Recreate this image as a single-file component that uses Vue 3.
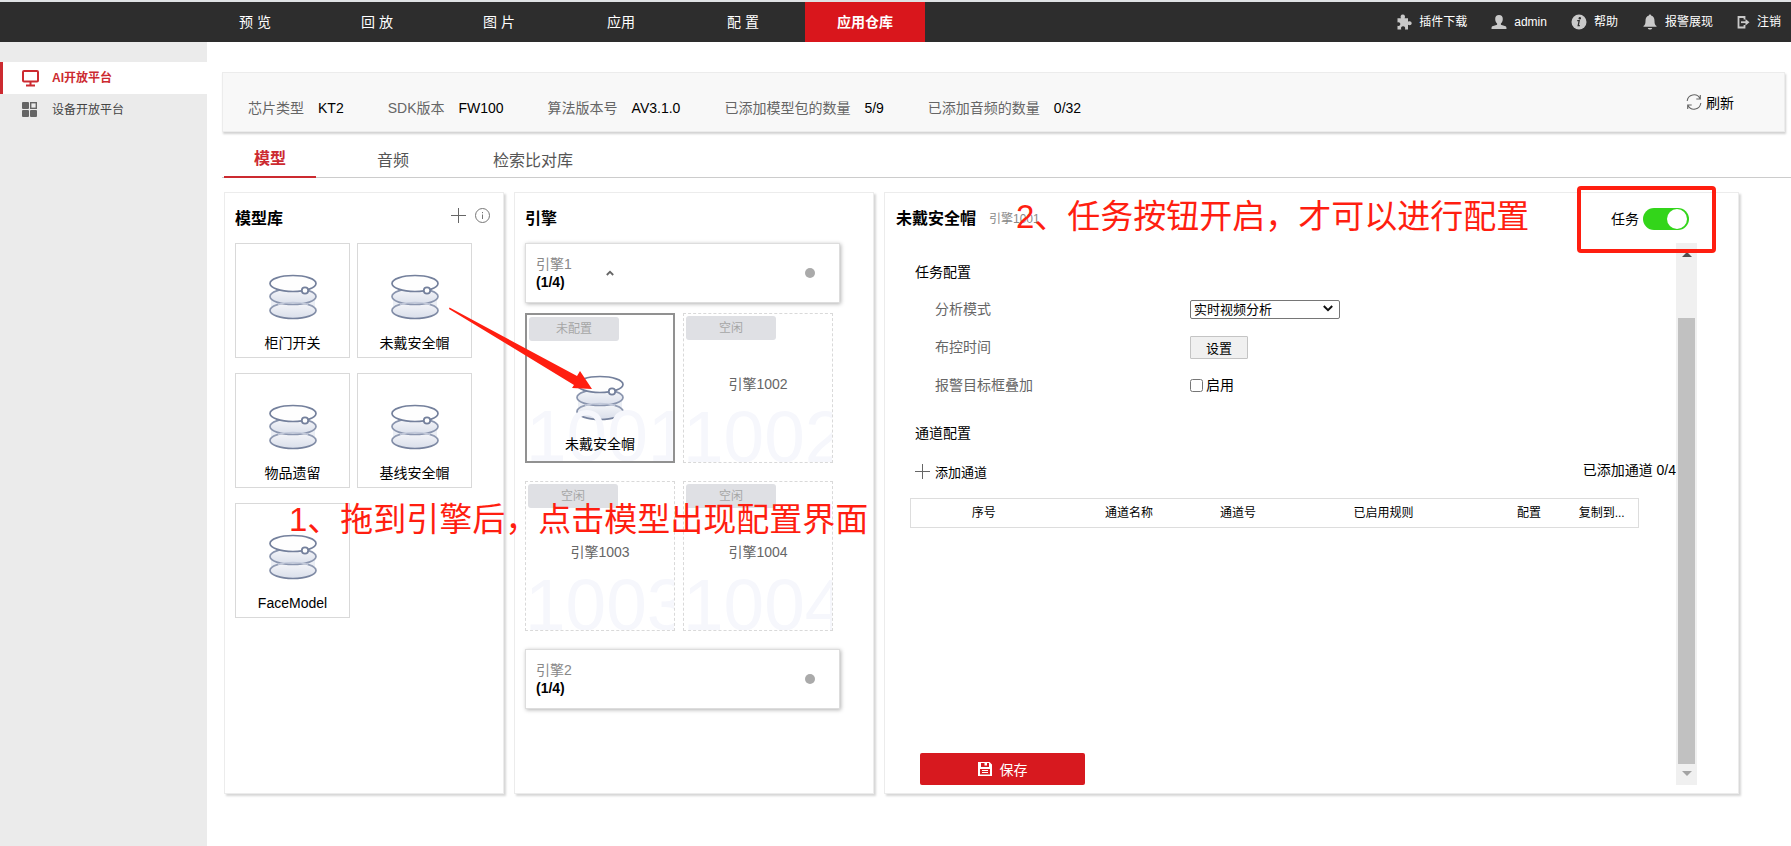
<script setup>
import { ref } from 'vue'

const navItems = ['预 览', '回 放', '图 片', '应用', '配 置', '应用仓库']
const activeNav = ref('应用仓库')

const chipInfo = [
  { label: '芯片类型', value: 'KT2' },
  { label: 'SDK版本', value: 'FW100' },
  { label: '算法版本号', value: 'AV3.1.0' },
  { label: '已添加模型包的数量', value: '5/9' },
  { label: '已添加音频的数量', value: '0/32' },
]

const tabs = ['模型', '音频', '检索比对库']
const activeTab = ref('模型')

const models = ['柜门开关', '未戴安全帽', '物品遗留', '基线安全帽', 'FaceModel']

const slots = [
  { id: '1001', model: '未戴安全帽', status: '未配置' },
  { id: '1002', status: '空闲' },
  { id: '1003', status: '空闲' },
  { id: '1004', status: '空闲' },
]
const selectedSlot = ref('1001')

const columns = [
  { title: '序号', width: 20 },
  { title: '通道名称', width: 20 },
  { title: '通道号', width: 10 },
  { title: '已启用规则', width: 30 },
  { title: '配置', width: 10 },
  { title: '复制到...', width: 10 },
]

const taskOn = ref(true)
const overlayOn = ref(false)
</script>

<template>
  <div class="page" lang="zh-CN">
    <svg class="defs" width="0" height="0" aria-hidden="true">
      <defs>
        <linearGradient id="diskFill" x1="0" y1="0" x2="0" y2="1">
          <stop offset="0" stop-color="#f6f7fa" />
          <stop offset="1" stop-color="#d9deea" />
        </linearGradient>
        <linearGradient id="diskLine" x1="0" y1="0" x2="0" y2="1">
          <stop offset="0" stop-color="#9aa4ba" />
          <stop offset="1" stop-color="#74809c" />
        </linearGradient>
        <symbol id="disk" viewBox="0 0 48 46">
          <rect x="2" y="22" width="44" height="14" fill="#eceff5" />
          <ellipse cx="24" cy="36.500" rx="23" ry="8" fill="url(#diskFill)" stroke="url(#diskLine)" stroke-width="1.700" />
          <ellipse cx="24" cy="22.500" rx="23" ry="8" fill="url(#diskFill)" stroke="#8a95ae" stroke-width="1.700" />
          <path d="M9 30.300Q24 26.500 39 30.300" fill="none" stroke="#c3cadb" stroke-width="1.400" />
          <ellipse cx="24" cy="9.500" rx="23" ry="8" fill="#fefefe" stroke="#74809c" stroke-width="1.700" />
          <circle cx="36" cy="16.500" r="3.200" fill="#fff" stroke="#74809c" stroke-width="1.800" />
        </symbol>
      </defs>
    </svg>

    <header class="topbar">
      <nav class="nav">
        <a v-for="n in navItems" :key="n" href="#" class="nav-item" :class="{ active: n === activeNav }">{{ n }}</a>
      </nav>
      <div class="tools">
        <a href="#" class="tool">
          <svg width="16" height="16" viewBox="0 0 16 16" fill="#c9c9c9"><path d="M5 4.200C4 2.500 4.800.5 6.800.5s2.800 2 1.800 3.700H12v3.600c1.600-1 3.700-.3 3.700 1.500s-2.100 2.500-3.700 1.500v4.700H8.900c.8-1.700 0-3.200-1.800-3.200s-2.600 1.500-1.800 3.200H1.500v-3.700c1.500.6 2.800-.1 2.800-1.700S3 7.800 1.500 8.400V4.200z" /></svg>
          <span>插件下载</span>
        </a>
        <a href="#" class="tool">
          <svg width="16" height="16" viewBox="0 0 16 16" fill="#c9c9c9"><path d="M8 1c2.500 0 3.800 1.700 3.800 3.900 0 2-.9 3.700-1.900 4.600v1.200l4.700 1.600c.6.300.9.900.9 2.700H.5c0-1.800.3-2.400.9-2.700l4.700-1.600V9.500c-1-.9-1.900-2.600-1.900-4.600C4.200 2.700 5.500 1 8 1z" /></svg>
          <span>admin</span>
        </a>
        <a href="#" class="tool">
          <svg width="16" height="16" viewBox="0 0 16 16"><circle cx="8" cy="8" r="7.500" fill="#c9c9c9" /><circle cx="8.800" cy="4.200" r="1.200" fill="#2d2d2d" /><path d="M6.200 6.700h2L7.200 11.700h1.600" fill="none" stroke="#2d2d2d" stroke-width="1.300" /></svg>
          <span>帮助</span>
        </a>
        <a href="#" class="tool">
          <svg width="16" height="16" viewBox="0 0 16 16" fill="#c9c9c9"><path d="M8 .5c.8 0 1.100.5 1.100 1.100C11.600 2.200 12.500 4.200 12.500 7c0 3 .6 4 2 5v.8h-13V12c1.400-1 2-2 2-5 0-2.800.9-4.800 3.400-5.400C6.900 1 7.200.5 8 .5zM5.800 14h4.400c-.5 2-3.900 2-4.400 0z" /></svg>
          <span>报警展现</span>
        </a>
        <a href="#" class="tool">
          <svg width="13" height="16" viewBox="0 0 13 16" fill="none" stroke="#c9c9c9" stroke-width="1.800"><path d="M7.500 5.500V3H1.500v10.500h6V11" /><path d="M4 8.200h5" /><path d="M8.500 5L12.500 8.200l-4 3.200z" fill="#c9c9c9" stroke="none" /></svg>
          <span>注销</span>
        </a>
      </div>
    </header>

    <div class="main">
      <aside class="sidebar">
        <a href="#" class="side-item active">
          <svg width="18" height="18" viewBox="0 0 18 18" fill="none" stroke="#cc2a30" stroke-width="2"><rect x="1" y="2" width="15" height="10.500" rx="1" /><path d="M8.500 12.500V16M4 16.500h9" /></svg>
          <span>AI开放平台</span>
        </a>
        <a href="#" class="side-item">
          <svg width="18" height="18" viewBox="0 0 18 18" fill="#666"><rect x="0" y="1" width="7" height="7" rx="1" /><rect x="8.700" y="1.700" width="5.600" height="5.600" fill="none" stroke="#666" stroke-width="1.400" /><rect x="0" y="9" width="7" height="7" rx="1" /><rect x="8" y="9" width="7" height="7" rx="1" /></svg>
          <span>设备开放平台</span>
        </a>
      </aside>

      <main class="content">
        <section class="info-bar">
          <dl class="info-list">
            <div v-for="c in chipInfo" :key="c.label" class="info-item">
              <dt>{{ c.label }}</dt>
              <dd>{{ c.value }}</dd>
            </div>
          </dl>
          <button type="button" class="plain refresh">
            <svg width="16" height="16" viewBox="0 0 16 16" fill="none" stroke="#666" stroke-width="1.100"><path d="M1.200 7A6.800 6.800 0 0 1 14 4.500M14.300 1v4h-4M14.800 9A6.800 6.800 0 0 1 2 11.500M1.700 15v-4h4" /></svg>
            <span>刷新</span>
          </button>
        </section>

        <nav class="tabs">
          <button v-for="t in tabs" :key="t" type="button" class="tab" :class="{ active: t === activeTab }" @click="activeTab = t">{{ t }}</button>
        </nav>

        <div class="panels">
          <section class="panel library">
            <header class="panel-head">
              <h2>模型库</h2>
              <div class="head-actions">
                <button type="button" class="plain" aria-label="添加模型">
                  <svg width="16" height="16" viewBox="0 0 16 16" stroke="#666"><path d="M7.500 0v15M0 7.500h15" /></svg>
                </button>
                <button type="button" class="plain" aria-label="说明">
                  <svg width="16" height="16" viewBox="0 0 16 16" fill="none" stroke="#777"><circle cx="7.500" cy="7.500" r="7" /><path d="M7.500 6.500V11M7.500 4v1.200" /></svg>
                </button>
              </div>
            </header>
            <div class="model-grid">
              <div v-for="m in models" :key="m" class="card">
                <svg class="disk" width="48" height="46"><use href="#disk" /></svg>
                <span>{{ m }}</span>
              </div>
            </div>
          </section>

          <section class="panel engines">
            <header class="panel-head"><h2>引擎</h2></header>
            <div class="engine-bar">
              <div class="engine-name"><span>引擎1</span><strong>(1/4)</strong></div>
              <svg class="chevron" width="8" height="6" viewBox="0 0 8 6" fill="none" stroke="#666" stroke-width="1.800"><path d="M.8 5L4 1.800 7.200 5" /></svg>
              <i class="dot"></i>
            </div>
            <div class="slot-grid">
              <div v-for="s in slots" :key="s.id" class="slot" :class="{ selected: s.id === selectedSlot, filled: s.model }" @click="selectedSlot = s.id">
                <svg v-if="s.model" class="disk" width="48" height="46"><use href="#disk" /></svg>
                <span class="watermark" aria-hidden="true">{{ s.id }}</span>
                <span class="status">{{ s.status }}</span>
                <span class="slot-name">{{ s.model || '引擎' + s.id }}</span>
              </div>
            </div>
            <div class="engine-bar second">
              <div class="engine-name"><span>引擎2</span><strong>(1/4)</strong></div>
              <i class="dot"></i>
            </div>
          </section>

          <section class="panel config">
            <header class="panel-head config-head">
              <h2>未戴安全帽</h2>
              <span class="sub">引擎1001</span>
              <label class="task-switch">
                <span>任务</span>
                <input v-model="taskOn" type="checkbox" role="switch" />
              </label>
            </header>
            <div class="config-body">
              <div class="config-scroll">
                <h3>任务配置</h3>
                <div class="row">
                  <label for="mode">分析模式</label>
                  <div class="select-wrap">
                    <select id="mode"><option>实时视频分析</option></select>
                    <svg width="10" height="7" viewBox="0 0 10 7" fill="none" stroke="#111" stroke-width="2"><path d="M.8 1L5 5.200 9.200 1" /></svg>
                  </div>
                </div>
                <div class="row">
                  <label for="schedule">布控时间</label>
                  <button id="schedule" type="button" class="set-btn">设置</button>
                </div>
                <div class="row">
                  <span>报警目标框叠加</span>
                  <label class="check"><input v-model="overlayOn" type="checkbox" />启用</label>
                </div>
                <h3 class="channel-title">通道配置</h3>
                <div class="channel-tools">
                  <button type="button" class="plain add-channel">
                    <svg width="16" height="16" viewBox="0 0 16 16" stroke="#666"><path d="M7.500 0v15M0 7.500h15" /></svg>
                    <span>添加通道</span>
                  </button>
                  <span class="count">已添加通道 0/4</span>
                </div>
                <table class="channels">
                  <thead>
                    <tr>
                      <th v-for="c in columns" :key="c.title" :style="{ width: c.width + '%' }">{{ c.title }}</th>
                    </tr>
                  </thead>
                </table>
                <button type="button" class="save">
                  <svg width="14" height="14" viewBox="0 0 14 14"><path fill="#fff" fill-rule="evenodd" d="M0 0h11.500L14 2.500V14H0zM3 1v4h8V1H9v2.500H6.500V1zM2 7v5.500h10V7z" /><path d="M4 8.500h6M4 10.500h6" stroke="#fff" /></svg>
                  <span>保存</span>
                </button>
              </div>
              <div class="scrollbar" aria-hidden="true">
                <i class="arrow up"></i>
                <i class="thumb"></i>
                <i class="arrow down"></i>
              </div>
            </div>
          </section>
        </div>
      </main>
    </div>

    <div class="notes">
      <p class="note note-drag">1、拖到引擎后，点击模型出现配置界面</p>
      <p class="note note-task">2、任务按钮开启，才可以进行配置</p>
      <div class="note-frame"></div>
      <svg class="note-arrow" width="146" height="84" viewBox="0 0 146 84"><path d="M1.500.5L129 69l3-5 12 18-20-1 2-3L1 2z" fill="#ff1e10" /></svg>
    </div>
  </div>
</template>

<style>
body {
  margin: 0;
}
</style>

<style scoped>
.page {
  position: relative;
  box-sizing: border-box;
  display: flex;
  flex-direction: column;
  min-height: 100vh;
  background: #fff;
  color: #000;
  font-family: "Liberation Sans", "Noto Sans CJK SC", sans-serif;
  font-size: 14px;
  line-height: 20px;
}
.page *,
.page *::before {
  box-sizing: border-box;
}
.defs {
  position: absolute;
}
svg {
  display: block;
  flex: none;
}
a {
  text-decoration: none;
}
h2,
h3,
p,
dl,
dd {
  margin: 0;
}
button,
select {
  font-family: inherit;
}
.plain {
  display: flex;
  align-items: center;
  padding: 0;
  border: 0;
  background: none;
}

.topbar {
  display: flex;
  justify-content: space-between;
  height: 42px;
  padding: 0 10px 0 195px;
  border-top: 2px solid #dfe2e4;
  background: #2d2d2d;
}
.nav {
  display: flex;
  gap: 2px;
}
.nav-item {
  width: 120px;
  line-height: 40px;
  text-align: center;
  color: #fff;
}
.nav-item.active {
  background: #d9161c;
  font-weight: bold;
}
.tools {
  display: flex;
  align-items: center;
  gap: 24px;
}
.tool {
  display: flex;
  align-items: center;
  gap: 7px;
  color: #fff;
  font-size: 12px;
}

.main {
  display: flex;
  flex: 1;
}
.sidebar {
  flex: none;
  width: 207px;
  padding-top: 20px;
  background: #ebebeb;
}
.side-item {
  display: flex;
  align-items: center;
  gap: 12px;
  height: 32px;
  padding-left: 19px;
  border-left: 3px solid transparent;
  color: #444;
  font-size: 12px;
}
.side-item.active {
  border-color: #cc2a30;
  background: #fff;
  color: #cc2a30;
  font-weight: bold;
}
.content {
  display: flex;
  flex: 1;
  flex-direction: column;
  min-width: 0;
  padding: 30px 0 52px 15px;
}

.info-bar {
  display: flex;
  justify-content: space-between;
  height: 60px;
  margin-right: 6px;
  padding: 0 50px 0 25px;
  border: 1px solid #ececec;
  background: #f8f8f8;
  box-shadow: 1px 2px 2px rgba(0, 0, 0, 0.18);
}
.info-list {
  display: flex;
  gap: 44px;
  padding-top: 25px;
}
.info-item {
  display: flex;
  gap: 14px;
}
.info-item dt {
  color: #666;
}
.refresh {
  gap: 4px;
  align-self: center;
  font-size: 14px;
}

.tabs {
  display: flex;
  height: 46px;
  padding-left: 2px;
  border-bottom: 1px solid #ccc;
}
.tab {
  width: 140px;
  height: 46px;
  padding: 8px 0 0;
  border: 0;
  background: none;
  color: #555;
  font-size: 16px;
}
.tab.active {
  width: 92px;
  margin-right: 7px;
  padding-top: 6px;
  border-bottom: 2px solid #cc2a30;
  color: #cc2a30;
  font-weight: bold;
}

.panels {
  display: flex;
  flex: 1;
  gap: 10px;
  margin: 14px 52px 0 2px;
}
.panel {
  flex: none;
  min-height: 602px;
  border: 1px solid #ececec;
  box-shadow: 2px 2px 2px rgba(0, 0, 0, 0.16);
}
.library {
  width: 280px;
  padding: 0 10px;
}
.engines {
  width: 360px;
  padding: 0 10px;
}
.config {
  display: flex;
  flex: 1;
  flex-direction: column;
  padding: 0 41px 8px 0;
}
.panel-head {
  display: flex;
  align-items: center;
  height: 50px;
  padding-top: 2px;
}
.panel-head h2 {
  font-size: 16px;
  font-weight: bold;
}
.head-actions {
  display: flex;
  gap: 8px;
  margin: 0 2px 6px auto;
}

.model-grid {
  display: grid;
  grid-template-columns: 115px 115px;
  gap: 15px 7px;
}
.card {
  display: flex;
  flex-direction: column;
  align-items: center;
  height: 115px;
  padding-top: 30px;
  border: 1px solid #d9d9d9;
}
.card span {
  margin-top: 13px;
}

.engine-bar {
  display: flex;
  align-items: center;
  width: 315px;
  height: 60px;
  padding: 0 24px 0 10px;
  border: 1px solid #ddd;
  background: #fff;
  box-shadow: 1px 1px 4px rgba(0, 0, 0, 0.3);
}
.engine-bar.second {
  margin-top: 18px;
}
.engine-name {
  display: flex;
  flex-direction: column;
  width: 70px;
  line-height: 18px;
}
.engine-name span {
  color: #888;
}
.dot {
  width: 10px;
  height: 10px;
  margin-left: auto;
  border-radius: 50%;
  background: #aaa;
}
.slot-grid {
  display: grid;
  grid-template-columns: 150px 150px;
  gap: 18px 8px;
  margin-top: 10px;
}
.slot {
  position: relative;
  display: flex;
  flex-direction: column;
  align-items: center;
  justify-content: center;
  height: 150px;
  padding-bottom: 8px;
  border: 1px dashed #d9d9d9;
  overflow: hidden;
}
.slot.selected {
  border: 2px solid #919191;
}
.slot.filled {
  justify-content: flex-start;
  padding-top: 60px;
}
.slot-name {
  position: relative;
  color: #666;
}
.filled .slot-name {
  margin-top: 13px;
  color: #000;
}
.watermark {
  position: absolute;
  bottom: -17px;
  left: -1px;
  color: #f6f7fc;
  font-size: 73px;
  line-height: 84px;
}
.status {
  position: absolute;
  top: 2px;
  left: 2px;
  width: 90px;
  border-radius: 3px;
  background: #dfe0e4;
  color: #a6a6a6;
  font-size: 12px;
  line-height: 24px;
  text-align: center;
}

.config-head {
  padding-left: 11px;
}
.sub {
  margin-left: 13px;
  color: #888;
  font-size: 12px;
}
.task-switch {
  display: flex;
  align-items: center;
  gap: 4px;
  margin-left: auto;
  margin-right: 8px;
}
.task-switch input {
  width: 46px;
  height: 22px;
  margin: 0;
  padding: 1px 2px;
  border-radius: 11px;
  background: #ccc;
  appearance: none;
}
.task-switch input::before {
  content: "";
  display: block;
  width: 20px;
  height: 20px;
  border-radius: 50%;
  background: #fff;
}
.task-switch input:checked {
  background: #33d51a;
}
.task-switch input:checked::before {
  margin-left: auto;
}
.config-body {
  display: flex;
  flex: 1;
}
.config-scroll {
  display: flex;
  flex: 1;
  flex-direction: column;
  align-items: flex-start;
  padding: 19px 0 0 30px;
}
.config-scroll h3 {
  margin-bottom: 8px;
  font-size: 14px;
  font-weight: normal;
}
.row {
  display: flex;
  align-items: center;
  height: 38px;
  padding-left: 20px;
  color: #666;
}
.row > :first-child {
  width: 255px;
}
.select-wrap {
  position: relative;
}
.select-wrap select {
  width: 150px;
  height: 19px;
  padding: 0 3px;
  border: 1px solid #767676;
  border-radius: 2px;
  background: #fff;
  color: #000;
  font-size: 13px;
  line-height: 17px;
  appearance: none;
}
.select-wrap svg {
  position: absolute;
  top: 6px;
  right: 7px;
  pointer-events: none;
}
.set-btn {
  width: 58px;
  height: 23px;
  padding: 0;
  border: 1px solid #c4c4c4;
  border-radius: 1px;
  background: #f0f0f0;
  color: #000;
  font-size: 13px;
}
.check {
  display: flex;
  align-items: center;
  gap: 3px;
  color: #000;
}
.check input {
  width: 13px;
  height: 13px;
  margin: 0;
}
.config-scroll .channel-title {
  margin: 19px 0 16px;
}
.channel-tools {
  display: flex;
  align-items: center;
  justify-content: space-between;
  align-self: stretch;
}
.add-channel {
  gap: 4px;
  height: 25px;
  font-size: 13px;
}
.count {
  margin-bottom: 4px;
}
.channels {
  align-self: stretch;
  margin: 14px 37px 0 -5px;
  border: 1px solid #ddd;
  border-spacing: 0;
  table-layout: fixed;
}
.channels th {
  height: 28px;
  padding: 0;
  font-size: 12px;
  font-weight: normal;
}
.save {
  display: flex;
  align-items: center;
  justify-content: center;
  gap: 8px;
  width: 165px;
  height: 32px;
  margin: auto 0 0 5px;
  padding: 0;
  border: 0;
  border-radius: 2px;
  background: #d7191f;
  color: #fff;
  font-size: 14px;
}
.scrollbar {
  display: flex;
  flex-direction: column;
  align-items: center;
  width: 21px;
  background: #f0f0f0;
}
.arrow {
  flex: none;
  width: 0;
  height: 0;
  border: 5px solid transparent;
}
.arrow.up {
  margin-top: 4px;
  border-bottom-color: #505050;
}
.arrow.down {
  margin: 7px 0 4px;
  border-top-color: #a3a3a3;
}
.thumb {
  flex: 1;
  width: 17px;
  margin-top: 61px;
  background: #c1c1c1;
}

/* Tutorial callouts laid over the console */
.notes {
  position: absolute;
  inset: 0;
  overflow: hidden;
  pointer-events: none;
}
.note {
  position: absolute;
  color: #ff1e10;
  font-size: 33px;
  line-height: 40px;
  white-space: nowrap;
}
.note-drag {
  top: 500px;
  left: 289px;
}
.note-task {
  top: 197px;
  left: 1016px;
}
.note-frame {
  position: absolute;
  top: 186px;
  right: 75px;
  width: 139px;
  height: 67px;
  border: 4px solid #ff1e10;
  border-radius: 4px;
}
.note-arrow {
  position: absolute;
  top: 307px;
  left: 448px;
}
</style>
